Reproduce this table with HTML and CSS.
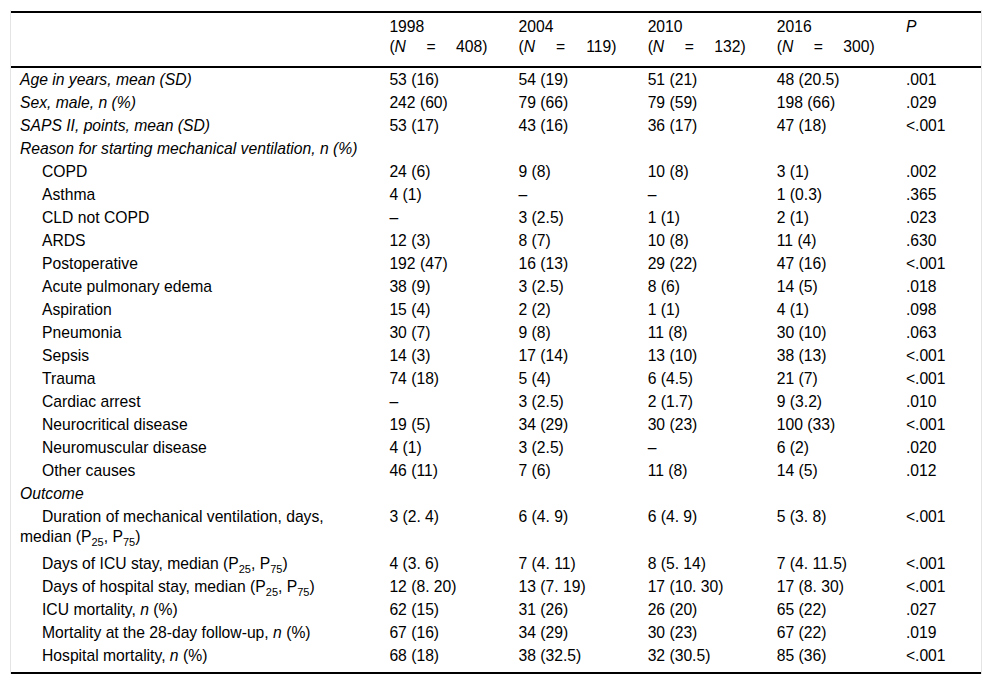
FILE: index.html
```html
<!DOCTYPE html>
<html lang="en">
<head>
<meta charset="utf-8">
<title>Table</title>
<link rel="stylesheet" href="styles.css">
</head>
<body>
<div class="wrap">
<table class="data">
<colgroup>
<col class="c-label"><col class="c-year"><col class="c-year"><col class="c-year"><col class="c-year"><col class="c-p">
</colgroup>
<thead>
<tr>
<th></th>
<th>1998<span class="n"><span>(<i>N</i></span><span>=</span><span>408)</span></span></th>
<th>2004<span class="n"><span>(<i>N</i></span><span>=</span><span>119)</span></span></th>
<th>2010<span class="n"><span>(<i>N</i></span><span>=</span><span>132)</span></span></th>
<th>2016<span class="n"><span>(<i>N</i></span><span>=</span><span>300)</span></span></th>
<th><i>P</i></th>
</tr>
</thead>
<tbody>
<tr><td><i>Age in years, mean (SD)</i></td><td>53 (16)</td><td>54 (19)</td><td>51 (21)</td><td>48 (20.5)</td><td>.001</td></tr>
<tr><td><i>Sex, male, n (%)</i></td><td>242 (60)</td><td>79 (66)</td><td>79 (59)</td><td>198 (66)</td><td>.029</td></tr>
<tr><td><i>SAPS II, points, mean (SD)</i></td><td>53 (17)</td><td>43 (16)</td><td>36 (17)</td><td>47 (18)</td><td>&lt;.001</td></tr>
<tr><td><i>Reason for starting mechanical ventilation, n (%)</i></td><td></td><td></td><td></td><td></td><td></td></tr>
<tr><td class="ind">COPD</td><td>24 (6)</td><td>9 (8)</td><td>10 (8)</td><td>3 (1)</td><td>.002</td></tr>
<tr><td class="ind">Asthma</td><td>4 (1)</td><td>–</td><td>–</td><td>1 (0.3)</td><td>.365</td></tr>
<tr><td class="ind">CLD not COPD</td><td>–</td><td>3 (2.5)</td><td>1 (1)</td><td>2 (1)</td><td>.023</td></tr>
<tr><td class="ind">ARDS</td><td>12 (3)</td><td>8 (7)</td><td>10 (8)</td><td>11 (4)</td><td>.630</td></tr>
<tr><td class="ind">Postoperative</td><td>192 (47)</td><td>16 (13)</td><td>29 (22)</td><td>47 (16)</td><td>&lt;.001</td></tr>
<tr><td class="ind">Acute pulmonary edema</td><td>38 (9)</td><td>3 (2.5)</td><td>8 (6)</td><td>14 (5)</td><td>.018</td></tr>
<tr><td class="ind">Aspiration</td><td>15 (4)</td><td>2 (2)</td><td>1 (1)</td><td>4 (1)</td><td>.098</td></tr>
<tr><td class="ind">Pneumonia</td><td>30 (7)</td><td>9 (8)</td><td>11 (8)</td><td>30 (10)</td><td>.063</td></tr>
<tr><td class="ind">Sepsis</td><td>14 (3)</td><td>17 (14)</td><td>13 (10)</td><td>38 (13)</td><td>&lt;.001</td></tr>
<tr><td class="ind">Trauma</td><td>74 (18)</td><td>5 (4)</td><td>6 (4.5)</td><td>21 (7)</td><td>&lt;.001</td></tr>
<tr><td class="ind">Cardiac arrest</td><td>–</td><td>3 (2.5)</td><td>2 (1.7)</td><td>9 (3.2)</td><td>.010</td></tr>
<tr><td class="ind">Neurocritical disease</td><td>19 (5)</td><td>34 (29)</td><td>30 (23)</td><td>100 (33)</td><td>&lt;.001</td></tr>
<tr><td class="ind">Neuromuscular disease</td><td>4 (1)</td><td>3 (2.5)</td><td>–</td><td>6 (2)</td><td>.020</td></tr>
<tr><td class="ind">Other causes</td><td>46 (11)</td><td>7 (6)</td><td>11 (8)</td><td>14 (5)</td><td>.012</td></tr>
<tr><td><i>Outcome</i></td><td></td><td></td><td></td><td></td><td></td></tr>
<tr class="tall"><td class="ind">Duration of mechanical ventilation, days,<span class="wrapline">median (P<sub>25</sub>, P<sub>75</sub>)</span></td><td>3 (2. 4)</td><td>6 (4. 9)</td><td>6 (4. 9)</td><td>5 (3. 8)</td><td>&lt;.001</td></tr>
<tr><td class="ind">Days of ICU stay, median (P<sub>25</sub>, P<sub>75</sub>)</td><td>4 (3. 6)</td><td>7 (4. 11)</td><td>8 (5. 14)</td><td>7 (4. 11.5)</td><td>&lt;.001</td></tr>
<tr><td class="ind">Days of hospital stay, median (P<sub>25</sub>, P<sub>75</sub>)</td><td>12 (8. 20)</td><td>13 (7. 19)</td><td>17 (10. 30)</td><td>17 (8. 30)</td><td>&lt;.001</td></tr>
<tr><td class="ind">ICU mortality, <i>n</i> (%)</td><td>62 (15)</td><td>31 (26)</td><td>26 (20)</td><td>65 (22)</td><td>.027</td></tr>
<tr><td class="ind">Mortality at the 28-day follow-up, <i>n</i> (%)</td><td>67 (16)</td><td>34 (29)</td><td>30 (23)</td><td>67 (22)</td><td>.019</td></tr>
<tr class="last"><td class="ind">Hospital mortality, <i>n</i> (%)</td><td>68 (18)</td><td>38 (32.5)</td><td>32 (30.5)</td><td>85 (36)</td><td>&lt;.001</td></tr>
</tbody>
</table>
</div>
</body>
</html>
```

FILE: styles.css
```css
html, body {
  margin: 0;
  padding: 0;
  background: #fff;
}

body {
  font-family: "Liberation Sans", Arial, sans-serif;
  font-size: 15.7px;
  color: #000;
}

.wrap {
  margin: 10px 0 0 10px;
  width: 970px;
  padding-top: 1px;
  border-left: 1px solid #e4e4e4;
  border-right: 1px solid #e4e4e4;
}

.data {
  width: 970px;
  table-layout: fixed;
  border-collapse: collapse;
  border-top: 2px solid #000;
  border-bottom: 2px solid #000;
}

.c-label { width: 369px; }
.c-year { width: 129px; }
.c-p { width: 84px; }

.data th {
  font-weight: normal;
  text-align: left;
  vertical-align: top;
  line-height: 20px;
  padding: 4px 9px 9px;
  border-bottom: 2px solid #000;
}

.n {
  display: flex;
  justify-content: space-between;
  width: 98px;
}

.data td {
  vertical-align: top;
  line-height: 17px;
  padding: 3px 9px;
  white-space: nowrap;
}

.data td.ind {
  text-indent: 22px;
}

.wrapline {
  display: block;
  text-indent: 0;
  margin-top: 3px;
}

.tall td {
  padding-bottom: 7px;
}

.last td {
  padding-bottom: 8px;
}

sub {
  font-size: 11px;
  line-height: 0;
  vertical-align: -4px;
}
```
